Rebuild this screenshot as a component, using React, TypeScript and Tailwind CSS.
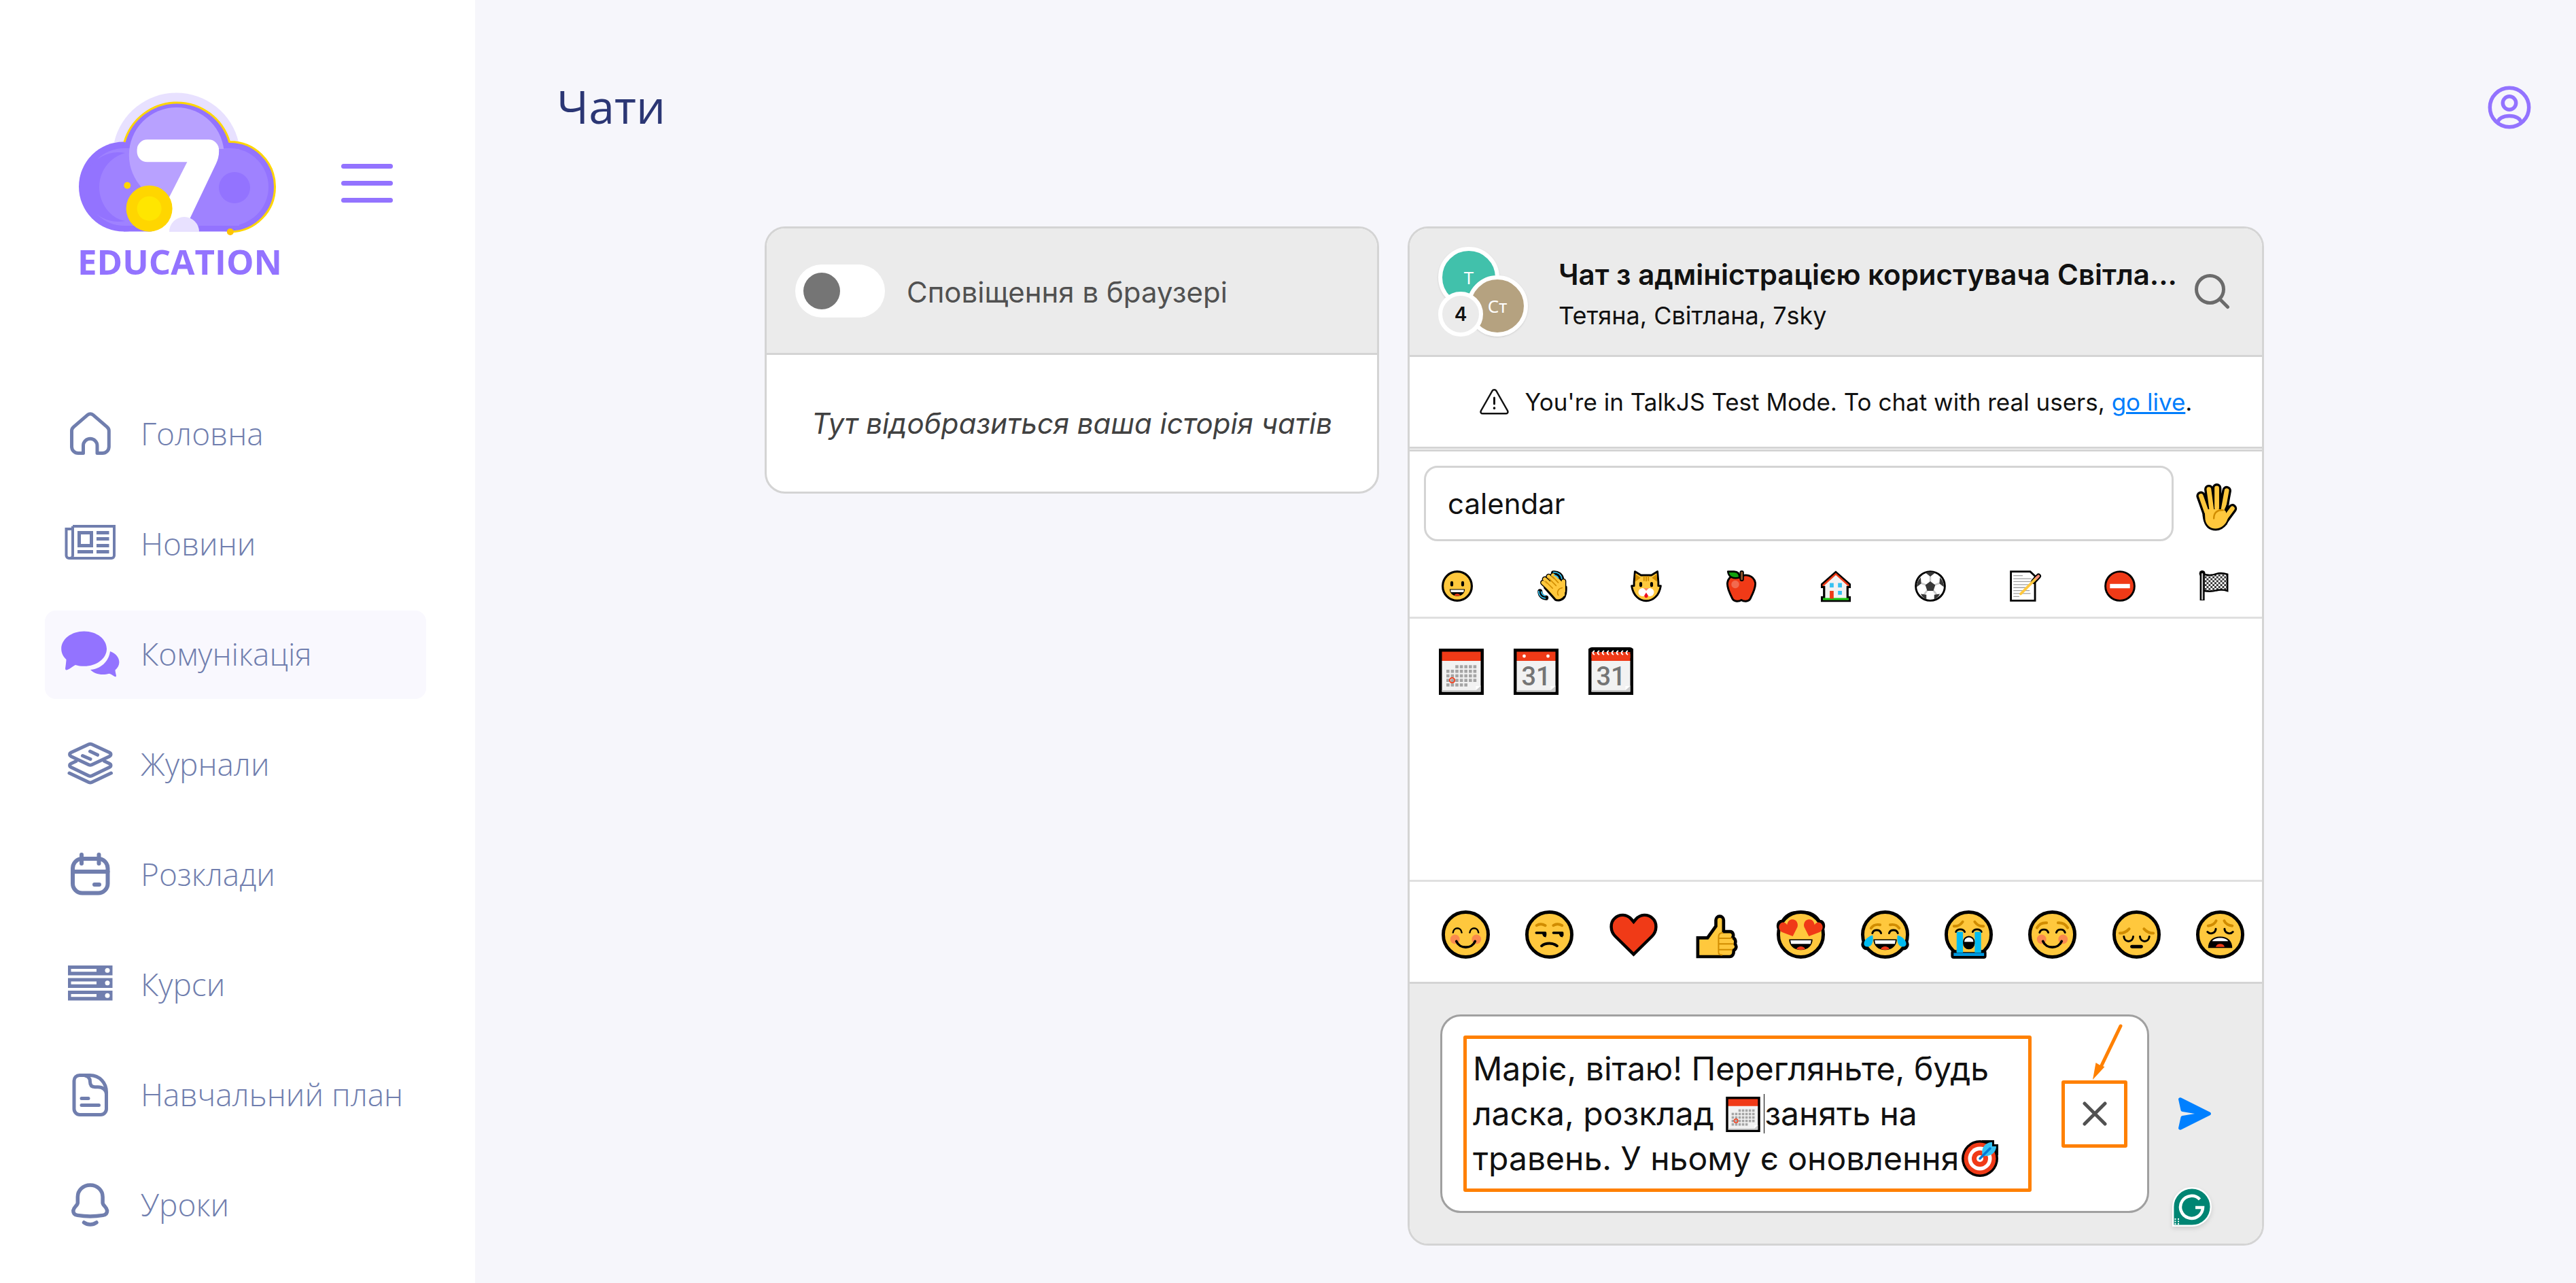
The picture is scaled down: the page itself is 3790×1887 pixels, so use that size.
import React from "react";

type IconProps = { className?: string };

/* ---------- Sidebar icons ---------- */

const NavSvg: React.FC<{ children: React.ReactNode }> = ({ children }) => (
	<svg viewBox="0 0 88 88" className="size-[88px] shrink-0" fill="none" stroke="currentColor" strokeWidth="5" strokeLinecap="round" strokeLinejoin="round" aria-hidden="true">
		{children}
	</svg>
);

const HomeIcon = () => (
	<NavSvg>
		<path d="M33.5 71.5H26a9.5 9.5 0 0 1-9.5-9.5V38.500a7 7 0 0 1 2.600-5.300L40 15.200a6 6 0 0 1 7.800 0L68.700 33.200a7 7 0 0 1 2.600 5.300V62a9.500 9.500 0 0 1-9.500 9.500H54V60.500a10.200 10.200 0 0 0-20.500 0z" />
	</NavSvg>
);

const NewsIcon = () => (
	<NavSvg>
		<g strokeWidth="4" strokeLinecap="butt" strokeLinejoin="miter">
			<path d="M18 17h61v43a4 4 0 0 1-4 4H12.500a4 4 0 0 1-4-4V21H18" />
			<path d="M18 17v43a4 4 0 0 1-4 4" />
			<path strokeWidth="5" d="M27.500 26.500h18v19h-18zM53 26.500h18.500M53 35.500h18.500M53 45.500h18.500M53 54.500h18.500M25 54.500h23" />
		</g>
	</NavSvg>
);

const ChatIcon = () => (
	<NavSvg>
		<g fill="currentColor" stroke="none">
			<path d="M34.700 9.600c18.600 0 33.300 11.500 33.300 25.600S53.300 60.800 34.700 60.800c-4.600 0-8.900-.6-12.800-1.900-3.300 2-6.800 4.600-10.900 6.900-2.500 1.200-4.300.7-3.900-2.200.7-4.400 1.200-8.800 1.400-12.600C3.900 46.700 1.200 41 1.200 35.200 1.200 21.100 16.100 9.600 34.700 9.600z" />
			<path d="M73 39c8.400 3 13.400 9.200 13.400 16 0 4.500-2.300 8.500-5.900 11.500.1 2.600.8 5 1.400 7.700.4 2-.8 2.600-2.300 1.700-2.700-1.500-5-3.300-7.900-4.200-3 .9-6.100 1.300-9.500 1.300-7.500 0-14-2.500-18.200-7C58.700 65 71 54.500 73 39z" />
		</g>
	</NavSvg>
);

const JournalIcon = () => (
	<NavSvg>
		<path d="M41.500 13.700a5.500 5.500 0 0 1 4.600 0L72 25.800c2.700 1.300 2.700 4.300 0 5.600L46.100 43.700a5.500 5.500 0 0 1-4.600 0L15.600 31.400c-2.700-1.300-2.700-4.300 0-5.600z" />
		<path d="M23 38.500l-7.400 3.400c-2.700 1.300-2.700 4.300 0 5.600l25.900 12.500a5.500 5.500 0 0 0 4.600 0L72 47.500c2.700-1.300 2.700-4.300 0-5.600l-7.400-3.400" />
		<path d="M13 56l28.500 13.400a5.500 5.500 0 0 0 4.600 0L74.500 56M32.500 30.500l11.500 5M43.500 24l11 5.300" />
	</NavSvg>
);

const ScheduleIcon = () => (
	<NavSvg>
		<rect x="18" y="20" width="51.500" height="50.500" rx="14" strokeWidth="6" />
		<path strokeWidth="6" d="M18 39h51.500M31 14v13M56.500 14v13M50 58h7" />
	</NavSvg>
);

const CoursesIcon = () => (
	<NavSvg>
		{[15, 33.5, 52].map((y) => (
			<g key={y} stroke="none">
				<rect x="11" y={y} width="65.500" height="14.500" fill="currentColor" />
				<rect x="15.500" y={y + 5} width="37.500" height="4.200" fill="#fff" />
				<circle cx="69" cy={y + 7.2} r="3.500" fill="#fff" />
			</g>
		))}
	</NavSvg>
);

const PlanIcon = () => (
	<NavSvg>
		<path d="M43.500 14.500H28a8 8 0 0 0-8 8V64a8.500 8.500 0 0 0 8.500 8.500h30.500a8.500 8.500 0 0 0 8.500-8.500V39.500C67.500 25.700 57.300 14.500 43.500 14.500z" />
		<path d="M36.500 15c4.500 1 7 4.500 7 9 0 5 2.500 7.700 7 7.700h4.500c7 0 12 4 12.500 10M31 48.500h10M31 58.500h25.500" />
	</NavSvg>
);

const BellIcon = () => (
	<NavSvg>
		<path strokeWidth="5.500" d="M43.700 14C33.300 14 25.300 21.500 25.300 31.500V40c0 4-6.500 6.500-6.500 12 0 3.500 2.500 5.800 6 6.400 12.500 2 25.300 2 37.800 0 3.500-.6 6-2.900 6-6.400 0-5.500-6.500-8-6.500-12v-8.500C62.100 21.500 54.100 14 43.700 14zM34.500 69c5.500 4 13 4 18.500 0" />
	</NavSvg>
);

const navItems = [
	{ label: "Головна", icon: HomeIcon },
	{ label: "Новини", icon: NewsIcon },
	{ label: "Комунікація", icon: ChatIcon, active: true },
	{ label: "Журнали", icon: JournalIcon },
	{ label: "Розклади", icon: ScheduleIcon },
	{ label: "Курси", icon: CoursesIcon },
	{ label: "Навчальний план", icon: PlanIcon },
	{ label: "Уроки", icon: BellIcon },
];

const Logo = () => (
	<svg viewBox="114 134 294 214" className="h-[214px] w-[294px]" aria-hidden="true">
		<path d="M168 209a94 94 0 0 1 183 0z" fill="#e8e1ff" />
		<circle cx="182" cy="274.500" r="66" fill="#9373ff" />
		<circle cx="339" cy="274.500" r="66" fill="#9373ff" />
		<circle cx="260" cy="231" r="81" fill="#9373ff" />
		<rect x="182" y="250" width="157" height="90.500" fill="#9373ff" />
		<path d="M183 209a80.500 80.500 0 0 1 154.500-.5A66 66 0 0 1 339 341" fill="none" stroke="#ffd600" strokeWidth="3" />
		<rect x="126" y="218" width="269" height="114" rx="57" fill="#9f82ff" />
		<path d="M184 225a51 51 0 1 0 0 100c-22-4-38-26-38-50s16-44 38-50z" fill="#9373ff" />
		<circle cx="259.800" cy="228" r="70" fill="#b8a1ff" />
		<path d="M258 332l64-113h30v113z" fill="#9f82ff" />
		<circle cx="345" cy="276" r="23" fill="#9373ff" />
		<rect x="201.600" y="205.300" width="120.400" height="33" rx="15" fill="#fff" />
		<path d="M275.500 238l14-20H322q1 12-4 22.500L270 341h-47z" fill="#fff" />
		<path d="M249 341a22 22 0 0 1 44 0z" fill="#e8e1ff" />
		<circle cx="219.600" cy="306.700" r="34" fill="#ffd600" />
		<circle cx="219.600" cy="306.700" r="18" fill="#ffe600" />
		<circle cx="187.300" cy="272.700" r="5" fill="#ffd600" />
		<circle cx="338.800" cy="341" r="5" fill="#ffc400" />
	</svg>
);

/* ---------- Emoji ---------- */

const Emoji: React.FC<{ className?: string; children: React.ReactNode }> = ({ className = "size-[71px]", children }) => (
	<svg viewBox="0 0 72 72" className={`${className} overflow-visible`} fill="none" strokeLinecap="round" strokeLinejoin="round" aria-hidden="true">
		{children}
	</svg>
);

const Head = () => <circle cx="36" cy="36" r="33.500" fill="#ffc83d" stroke="#000" strokeWidth="5" />;

const OpenMouth = () => (
	<>
		<path d="M18.500 43h35c0 9-7 16-17.500 16s-17.500-7-17.500-16z" fill="#000" />
		<path d="M20.500 44.500h31l-1 5.500h-29z" fill="#fff" />
		<path d="M29.500 57.500c2-5 11-5 13 0-4 1.600-9 1.600-13 0z" fill="#f03a17" />
	</>
);

const Brows: React.FC<{ d: string }> = ({ d }) => <path d={d} stroke="#d08c00" strokeWidth="4" />;

const Grin = ({ className }: IconProps) => (
	<Emoji className={className}>
		<Head />
		<path d="M23.500 28v5.500M48.500 28v5.500" stroke="#000" strokeWidth="6.500" />
		<OpenMouth />
	</Emoji>
);

const Blush = () => (
	<Emoji>
		<Head />
		<circle cx="20" cy="43" r="7" fill="#fa8a4e" />
		<circle cx="52" cy="43" r="7" fill="#fa8a4e" />
		<path d="M17 33c1-8.500 12-8.500 13 0M42 33c1-8.500 12-8.500 13 0" stroke="#000" strokeWidth="2.500" />
		<path d="M22 46c5 12 23 12 28 0" stroke="#000" strokeWidth="3.800" />
	</Emoji>
);

const Unamused = () => (
	<Emoji>
		<Head />
		<Brows d="M17 22.500q6-4 13 0M42 22.500q6-4 13 0" />
		<path d="M16.500 33.500H30v3.500M42 33.500h13.500v3.500" stroke="#000" strokeWidth="3.500" />
		<path d="M25 33h6v7c-4 0-5-2-6-7zM50 33h6v7c-4 0-5-2-6-7z" fill="#000" />
		<path d="M24.500 53c6-5 17-5 23 0" stroke="#000" strokeWidth="4" />
	</Emoji>
);

const Heart = () => (
	<Emoji>
		<path d="M36 65.500L8.500 38.500C1 31 .5 18 8 11.500c7-6.500 18-6 24.500 1.500l3.500 4 3.500-4C46 5.500 57 5 64 11.500c7.500 6.500 7 19.500-.5 27z" fill="#f03a17" stroke="#000" strokeWidth="4.500" strokeLinejoin="miter" />
	</Emoji>
);

const ThumbUp = () => (
	<Emoji>
		<path d="M7 69V41h14.500L34 23.500V14.500a5.700 5.700 0 0 1 11.500 0V31.500h9.500c5 0 6 6 4 9 4.500 2 5 6 3.500 9.500 3 3 2 8-2 9.500.5 6-2 9.500-6 9.500z" fill="#ffc83d" stroke="#000" strokeWidth="4.700" strokeLinejoin="miter" />
		<path d="M44 33.500c-4 0-6 2-6 6V62c0 3 2 4.500 5 4.500M38.500 41.500H58M38.500 50H60M38.500 58.500H58" stroke="#d08c00" strokeWidth="2" />
	</Emoji>
);

const HeartEyes = () => (
	<Emoji>
		<path d="M3 28c-3-7 0-12 5-12C17 2 28 2.500 36 2.500S55 2 64 16c5 0 8 5 5 12" stroke="#000" strokeWidth="4" />
		<Head />
		<path d="M24 38.500L8 32.500c-5-3-5.500-8-3.500-11.500 3-4.500 8-4 11 .5 1-6 4.500-8.500 9-8 5 .5 8 6 6.500 11zM48 38.500l16-6c5-3 5.500-8 3.500-11.500-3-4.500-8-4-11 .5-1-6-4.500-8.500-9-8-5 .5-8 6-6.500 11z" fill="#f03a17" />
		<OpenMouth />
	</Emoji>
);

const Joy = () => (
	<Emoji>
		<path d="M15 38C3 43-1 51 4 56c3 3 8 2 10 0M57 38c12 5 16 13 11 18-3 3-8 2-10 0" fill="#000" stroke="#000" strokeWidth="3" />
		<Head />
		<Brows d="M15 26.500c3-4.500 8-6 13.500-5M57 26.500c-3-4.500-8-6-13.500-5" />
		<path d="M17 34c2-6 11-6 13 0M42 34c2-6 11-6 13 0" stroke="#000" strokeWidth="3" />
		<OpenMouth />
		<path d="M17.500 37c1 7 0 12-2.500 15-3 3-8 3-10 0C2.500 47 9 39 17.500 37zM54.500 37c-1 7 0 12 2.500 15 3 3 8 3 10 0 2.500-5-4-13-12.500-15z" fill="#00bcf2" />
	</Emoji>
);

const Sob = () => (
	<Emoji>
		<Head />
		<rect x="9.500" y="59" width="53" height="13" rx="4" fill="#000" />
		<path d="M18 56h36v6H18z" fill="#ffc83d" />
		<Brows d="M14 23.500c6 .5 10-2 13-6.500M58 23.500c-6 .5-10-2-13-6.500" />
		<path d="M17 32c2-5 11-5 13 0M42 32c2-5 11-5 13 0" stroke="#000" strokeWidth="3" />
		<path d="M18 32h9.500v31H18zM45 32h9.500v31H45z" fill="#00bcf2" />
		<path d="M13.500 63.500h45.500v4.500H13.500z" fill="#0098e0" />
		<rect x="27.500" y="38" width="17.500" height="20" rx="8.700" fill="#000" />
		<path d="M29.500 47c0-9 13.500-9 13.500 0z" fill="#fff" />
	</Emoji>
);

const Relaxed = () => (
	<Emoji>
		<Head />
		<Brows d="M13 26c3-5 8-8 14.500-7.500M59 26c-3-5-8-8-14.500-7.500" />
		<circle cx="20" cy="43" r="7" fill="#fa8a4e" />
		<circle cx="52" cy="43" r="7" fill="#fa8a4e" />
		<path d="M17 33c2-6 11-6 13 0M42 33c2-6 11-6 13 0" stroke="#000" strokeWidth="3" />
		<path d="M22 46c5 12 23 12 28 0" stroke="#000" strokeWidth="3.800" />
	</Emoji>
);

const Pensive = () => (
	<Emoji>
		<Head />
		<Brows d="M11 34c6 0 10-2 14-6.500M61 34c-6 0-10-2-14-6.500" />
		<path d="M17 39c1 9.500 13 9.500 14 0M41 39c1 9.500 13 9.500 14 0" stroke="#000" strokeWidth="3" />
		<path d="M29 54h14" stroke="#000" strokeWidth="5" />
	</Emoji>
);

const Weary = () => (
	<Emoji>
		<Head />
		<Brows d="M18 23c6-.5 10-3 12-7.500M54 23c-6-.5-10-3-12-7.500" />
		<path d="M17 32c4 4.500 12 2 12.500-4.500M55 32c-4 4.500-12 2-12.500-4.500" stroke="#000" strokeWidth="3" />
		<path d="M18 56c0-10 6-17 18-17s18 7 18 17z" fill="#000" />
		<path d="M24 46c3-6.500 21-6.500 24 0z" fill="#fff" />
		<path d="M29.500 54.500c1-6 12-6 13 0z" fill="#f03a17" />
	</Emoji>
);

const RaisedHand = () => {
	const fingers = "M10.500 20L19 44M22.500 10l4 30M34.500 8v30M49.500 12L44 42M58 39L44 58";
	return (
		<Emoji className="size-[70px]">
			<path d={fingers} stroke="#000" strokeWidth="14" />
			<path d="M16 42c0 18 6 27 17 27 6 0 10-3 14-8l6-14-8-6-24-2z" fill="#ffc83d" stroke="#000" strokeWidth="7" />
			<path d={fingers} stroke="#ffc83d" strokeWidth="7" />
			<path d="M16 40h31l4 14c-4 18-30 22-34 2z" fill="#ffc83d" />
			<path d="M30 54c0-9 5-13 14-12.500" stroke="#d08c00" strokeWidth="2.500" />
			<path d="M47.500 41l4-9" stroke="#000" strokeWidth="3" />
		</Emoji>
	);
};

const Wave = () => {
	const fingers = "M16 28l24 22M20 20l24 22M29 14l22 22M39 11l16 17M63 25v22";
	return (
		<Emoji className="size-[46px]">
			<path d="M40 6c10-1 18 5 19 14M9 48c0 8 5 14 14 15" stroke="#000" strokeWidth="11" />
			<path d={fingers} stroke="#000" strokeWidth="13" />
			<path d="M20 40l24 27c6 4 18 1 22-7 4-8 3-14 3-22l-18-12z" fill="#ffc83d" stroke="#000" strokeWidth="5" />
			<path d={fingers} stroke="#ffc83d" strokeWidth="8.500" />
			<path d="M20 34l26-18 20 18v24L48 66z" fill="#ffc83d" />
			<path d="M22 25l16 16M29 18l17 17M38 14l13 14M60 40c-9 2-13 9-9 17" stroke="#d08c00" strokeWidth="2.500" />
			<path d="M40 4c11 0 18 6 19 15M42 11c5 1 8 3 9 7M6 48c0 9 6 15 15 16M12 49c1 5 4 8 9 9" stroke="#35c1f1" strokeWidth="2.800" />
		</Emoji>
	);
};

const Cat = () => (
	<Emoji className="size-[46px]">
		<path d="M10 2.500L24 11h24L62 2.500l2 24v9h5.500C66 58 52 70 36 70S6 58 2.500 35.500H8v-9z" fill="#ffc83d" stroke="#000" strokeWidth="4.500" />
		<path d="M11 8l12 9-12 9zM61 8l-12 9 12 9z" fill="#d08c00" />
		<path d="M31 14v9M36 14v10M41 14v9" stroke="#d08c00" strokeWidth="3" />
		<path d="M23.500 30v5M48.500 30v5" stroke="#000" strokeWidth="6.500" />
		<circle cx="27.500" cy="50" r="9.500" fill="#fff" />
		<circle cx="44.500" cy="50" r="9.500" fill="#fff" />
		<path d="M30 40.500h12L36 47z" fill="#ff8a65" />
		<path d="M36 51l4 6c1 8-9 8-8 0z" fill="#f00c20" />
	</Emoji>
);

const Apple = () => (
	<Emoji className="size-[46px]">
		<path d="M36 14c8-6 28-4 32 14 2 12-7 28-12 38-4 6-14 6-20 2-6 4-16 4-20-2C11 56 2 40 4 28 7 10 26 8 36 14z" fill="#f03a17" stroke="#000" strokeWidth="4.500" />
		<path d="M5 2.500h14c10 0 13 7 13 14-14 3-25 0-27-14z" fill="#13a10e" stroke="#000" strokeWidth="4" />
		<path d="M37 5v15" stroke="#000" strokeWidth="10" />
		<path d="M37 5v15" stroke="#8e562e" strokeWidth="4.500" />
		<circle cx="22" cy="32" r="9" fill="#f26a4f" />
	</Emoji>
);

const House = () => (
	<Emoji className="size-[46px]">
		<path d="M36 4L4 32v6h5v24H4v8h64v-8h-5V38h5v-6z" fill="#f2f2f2" stroke="#000" strokeWidth="5" strokeLinejoin="miter" />
		<path d="M7 34L36 8l29 26" stroke="#f03a17" strokeWidth="4" />
		<path d="M6.500 63.500h59V68h-59z" fill="#16c60c" />
		<path d="M22 29h9v10h-9zM41 29h9v10h-9zM41 47h9v9h-9z" fill="#35c1f1" />
		<path d="M22 47h9v18h-9z" fill="#f03a17" />
	</Emoji>
);

const Ball = () => (
	<Emoji className="size-[46px]">
		<circle cx="36" cy="36" r="33.500" fill="#fff" stroke="#000" strokeWidth="4.500" />
		<path d="M36 25v-11M47 33l11-4M43 46l7 9M29 46l-7 9M25 33l-11-4" stroke="#ccc" strokeWidth="4" />
		<path d="M36 25l11.500 8.500L43 47H29l-4.500-13.500zM25 5.500L36 14l11-8.500Q36 1 25 5.500zM5 38l10-8-1-14Q4 26 5 38zM67 38l-10-8 1-14Q68 26 67 38zM14 54l13 2v11Q18 63 14 54zM58 54l-13 2v11q9-4 13-13z" fill="#383838" />
	</Emoji>
);

const Memo = () => (
	<Emoji className="size-[46px]">
		<path d="M2.500 2.500H47L58 13v56.500H2.500z" fill="#fff" stroke="#000" strokeWidth="4.500" strokeLinejoin="miter" />
		<path d="M9 12h20M9 19h40M9 25.500h40M9 32.500h40M9 39.500h32M9 46.500h36M9 53h38M9 60h12" stroke="#a0a0a0" strokeWidth="2" />
		<path d="M55 25L66 13" stroke="#000" strokeWidth="12" />
		<path d="M25 54L63 16" stroke="#ffc83d" strokeWidth="6" />
		<path d="M61 18l5-5" stroke="#f78f7c" strokeWidth="6" />
	</Emoji>
);

const NoEntry = () => (
	<Emoji className="size-[46px]">
		<circle cx="36" cy="36" r="33.500" fill="#f03a17" stroke="#000" strokeWidth="4.500" />
		<rect x="13" y="31" width="46" height="10" fill="#fff" />
	</Emoji>
);

const Flag = () => (
	<Emoji className="size-[46px]">
		<defs>
			<pattern id="checks" width="9" height="9" patternUnits="userSpaceOnUse">
				<path d="M0 0h9v9H0z" fill="#fff" />
				<path d="M0 0h4.500v4.500H0zM4.500 4.500H9V9H4.500z" fill="#333" />
			</pattern>
		</defs>
		<path d="M11 9c14 3 20 2 29-1 9-3 17-2 26 1v38c-9-3-17-3-26-1-9 3-15 3-29 1z" fill="url(#checks)" stroke="#000" strokeWidth="4" strokeLinejoin="miter" />
		<path d="M8 7v62" stroke="#000" strokeWidth="11" strokeLinecap="butt" />
		<circle cx="8" cy="7" r="7" fill="#000" />
		<path d="M8 8v58" stroke="#ccc" strokeWidth="3.500" />
	</Emoji>
);

const calendarDots = [
	[2, 3, 4, 5, 6],
	[0, 1, 2, 3, 4, 5, 6],
	[0, 1, 2, 3, 4, 5, 6],
	[0, 1, 2, 3, 4, 5, 6],
	[0, 1, 2, 3, 4],
];

const CalendarFrame: React.FC<{ className?: string; label: string; children: React.ReactNode }> = ({ className = "h-[68px] w-[66px]", label, children }) => (
	<svg viewBox="0 0 66 68" className={`${className} overflow-visible`} role="img" aria-label={label}>
		<rect width="66" height="68" fill="#000" />
		<rect x="4.500" y="4.500" width="57" height="14" fill="#f03a17" />
		<rect x="4.500" y="18" width="57" height="45.500" fill="#f2f2f2" />
		<path d="M4.500 61h50l7-7v9.500h-57z" fill="#ccc" />
		<path d="M54.500 61v-6h7z" fill="#fff" />
		{children}
	</svg>
);

const CalendarDotted = ({ className }: IconProps) => (
	<CalendarFrame className={className} label="calendar">
		{calendarDots.map((row, y) => row.map((x) => <rect key={`${x}-${y}`} x={11 + x * 6.6} y={24.3 + y * 6.7} width="4.600" height="4.600" fill="#a5a5a5" />))}
		<circle cx="19.500" cy="46.500" r="3.700" fill="none" stroke="#f03a17" strokeWidth="1.800" />
	</CalendarFrame>
);

const CalendarDay = () => (
	<CalendarFrame label="date">
		<circle cx="15.500" cy="11" r="2.400" fill="#fff" />
		<circle cx="50.500" cy="11" r="2.400" fill="#fff" />
		<text x="33" y="54" textAnchor="middle" fill="#757575" className="font-['Roboto',sans-serif] text-[38px] font-medium">31</text>
	</CalendarFrame>
);

const CalendarSpiral = () => (
	<CalendarFrame label="spiral calendar">
		<path d="M0 4q0-6 5-6h56q5 0 5 6v4H0z" fill="#000" />
		<path d="M4.500 5h57v9h-57z" fill="#f03a17" />
		<path d="M9 3q-5 3 0 6M16 3q-5 3 0 6M23 3q-5 3 0 6M30 3q-5 3 0 6M37 3q-5 3 0 6M44 3q-5 3 0 6M51 3q-5 3 0 6M58 3q-5 3 0 6" fill="none" stroke="#fff" strokeWidth="2" />
		<text x="33" y="54" textAnchor="middle" fill="#757575" className="font-['Roboto',sans-serif] text-[38px] font-medium">31</text>
	</CalendarFrame>
);

const Target = () => (
	<svg viewBox="0 0 54 54" className="ml-1 inline-block size-[54px] align-[-10px]" role="img" aria-label="bullseye">
		<circle cx="27" cy="27" r="27" fill="#000" />
		<path d="M30 0h18v6h6v16H30z" fill="#000" />
		<circle cx="27" cy="27" r="23.500" fill="#f03a17" />
		<circle cx="27" cy="27" r="17.500" fill="#fff" />
		<circle cx="27" cy="27" r="12" fill="#f03a17" />
		<circle cx="27" cy="27" r="5" fill="#fff" />
		<path d="M31 23c-3-12 4-20 14-20v6h6c0 8-7 16-20 14z" fill="#35c1f1" />
		<path d="M27 27l15-15" stroke="#0078d7" strokeWidth="3.500" strokeLinecap="round" />
	</svg>
);

const categories = [
	{ name: "Smileys", icon: <Grin className="size-[46px]" /> },
	{ name: "People", icon: <Wave /> },
	{ name: "Animals", icon: <Cat /> },
	{ name: "Food", icon: <Apple /> },
	{ name: "Places", icon: <House /> },
	{ name: "Activities", icon: <Ball /> },
	{ name: "Objects", icon: <Memo /> },
	{ name: "Symbols", icon: <NoEntry /> },
	{ name: "Flags", icon: <Flag /> },
];

const frequent = [
	{ name: "smile", icon: <Blush /> },
	{ name: "unamused", icon: <Unamused /> },
	{ name: "heart", icon: <Heart /> },
	{ name: "thumbs up", icon: <ThumbUp /> },
	{ name: "heart eyes", icon: <HeartEyes /> },
	{ name: "joy", icon: <Joy /> },
	{ name: "sob", icon: <Sob /> },
	{ name: "relaxed", icon: <Relaxed /> },
	{ name: "pensive", icon: <Pensive /> },
	{ name: "weary", icon: <Weary /> },
];

/* ---------- Page parts ---------- */

const Sidebar: React.FC = () => (
	<aside className="w-[699px] shrink-0 bg-white pt-[134px] font-['Open_Sans',sans-serif]">
		<div className="flex items-start pl-[114px]">
			<a href="/" className="flex w-[294px] flex-col">
				<Logo />
				<span className="mt-2 text-[51px] leading-[56px] font-bold text-[#9373ff]">EDUCATION</span>
			</a>
			<button type="button" aria-label="Меню" className="mt-[107px] ml-[94px] flex flex-col gap-[18px]">
				<span className="h-[7px] w-[76px] rounded-full bg-[#9373ff]" />
				<span className="h-[7px] w-[76px] rounded-full bg-[#9373ff]" />
				<span className="h-[7px] w-[76px] rounded-full bg-[#9373ff]" />
			</button>
		</div>
		<nav className="mt-[162px] flex flex-col gap-8 pr-[72px] pl-[66px]">
			{navItems.map(({ label, icon: Icon, active }) => (
				<a
					key={label}
					href="#"
					className={`flex h-[130px] items-center gap-[30px] rounded-2xl pl-[23px] text-[46px] font-light text-[#707eae] ${active ? "bg-[#f9f8fe]" : ""}`}
				>
					<span className={active ? "text-[#9373ff]" : ""}>
						<Icon />
					</span>
					<span className="pb-1">{label}</span>
				</a>
			))}
		</nav>
	</aside>
);

const HistoryCard: React.FC = () => (
	<section className="self-start overflow-hidden rounded-[30px] border-[3px] border-[#d4d4d4] bg-white">
		<label className="flex h-[186px] items-center gap-8 border-b-[3px] border-[#d4d4d4] bg-[#ebebeb] pl-[42px] text-[42px] text-[#515151]">
			<input
				type="checkbox"
				role="switch"
				className="h-[78px] w-[132px] shrink-0 appearance-none rounded-full bg-white p-3 before:block before:size-[54px] before:rounded-full before:bg-[#757575] checked:before:ml-auto"
			/>
			<span className="pt-1">Сповіщення в браузері</span>
		</label>
		<p className="flex h-[201px] items-center justify-center text-[42px] text-[#414141] italic">Тут відобразиться ваша історія чатів</p>
	</section>
);

const ChatHeader: React.FC = () => (
	<header className="flex h-[189px] items-center border-b-[3px] border-[#d4d4d4] bg-[#ebebeb] pr-[47px] pl-[42px] text-[#111]">
		<div className="relative h-[132px] w-[132px] shrink-0 font-['Noto_Sans',sans-serif] text-[26px] text-white">
			<span className="absolute top-0 left-0 flex size-[90px] items-center justify-center rounded-full border-[6px] border-white bg-[#41c1ab] shadow-sm">Т</span>
			<span className="absolute right-0 bottom-0 flex size-[90px] items-center justify-center rounded-full border-[6px] border-white bg-[#b5a280] shadow-sm">Ст</span>
			<span className="absolute bottom-0 left-0 flex size-[66px] items-center justify-center rounded-full border-[6px] border-white bg-[#ebebeb] font-['Inter',sans-serif] text-[28px] font-semibold text-[#111]">4</span>
		</div>
		<div className="ml-[45px] min-w-0 flex-1 pt-[10px]">
			<h2 className="truncate text-[42px] leading-[60px] font-semibold">Чат з адміністрацією користувача Світла...</h2>
			<p className="truncate text-[36px] leading-[60px]">Тетяна, Світлана, 7sky</p>
		</div>
		<button type="button" aria-label="Search" className="ml-4 text-[#6b6b6b]">
			<svg viewBox="0 0 52 52" className="size-[52px]" fill="none" stroke="currentColor" strokeWidth="5" strokeLinecap="round" aria-hidden="true">
				<circle cx="22.500" cy="22.500" r="20" />
				<path d="M37.500 37.500l11 11" />
			</svg>
		</button>
	</header>
);

const TestModeNotice: React.FC = () => (
	<div className="flex h-[135px] items-center justify-center gap-6 border-b-[3px] border-[#d4d4d4] text-[35px] text-[#111]">
		<svg viewBox="0 0 43 38" className="h-[38px] w-[43px] shrink-0" fill="none" stroke="currentColor" strokeWidth="2.500" strokeLinecap="round" strokeLinejoin="round" aria-hidden="true">
			<path d="M18.500 3L2 32c-1.200 2.400 0 4.300 2.500 4.300h34c2.500 0 3.700-1.900 2.500-4.300L24.500 3c-1.400-2.300-4.600-2.300-6 0z" />
			<path d="M21.500 13v9" strokeWidth="3" />
			<path d="M21.500 28v.5" strokeWidth="3.500" />
		</svg>
		<p>
			You're in TalkJS Test Mode. To chat with real users,{" "}
			<a href="#" className="text-[#007dfc] underline decoration-3">go live</a>.
		</p>
	</div>
);

const EmojiPicker: React.FC = () => (
	<div className="mt-px border-t-[3px] border-[#d4d4d4]">
		<div className="flex items-center gap-[30px] pt-[21px] pr-[30px] pl-[21px]">
			<input
				type="text"
				aria-label="Search emoji"
				defaultValue="calendar"
				className="h-[111px] min-w-0 flex-1 rounded-[20px] border-[3px] border-[#d4d4d4] px-8 text-[42px] text-[#111]"
			/>
			<button type="button" aria-label="Skin tone" className="pt-2">
				<RaisedHand />
			</button>
		</div>
		<div className="grid h-[114px] grid-cols-9 border-b-[3px] border-[#e0e0e0] pt-5">
			{categories.map(({ name, icon }) => (
				<button key={name} type="button" aria-label={name} className="flex items-center justify-center">
					{icon}
				</button>
			))}
		</div>
		<div className="flex h-[387px] items-start gap-11 border-b-[3px] border-[#e0e0e0] px-[43px] pt-11">
			<button type="button"><CalendarDotted /></button>
			<button type="button"><CalendarDay /></button>
			<button type="button"><CalendarSpiral /></button>
		</div>
		<div className="flex h-[150px] items-center justify-between border-b-[3px] border-[#d4d4d4] pt-2 pr-[26px] pl-[47px]">
			{frequent.map(({ name, icon }) => (
				<button key={name} type="button" aria-label={name}>
					{icon}
				</button>
			))}
		</div>
	</div>
);

const Composer: React.FC = () => (
	<div className="relative flex items-center gap-[43px] bg-[#ebebeb] py-[45px] pr-[75px] pl-[45px]">
		<div className="relative flex min-w-0 flex-1 items-center gap-11 rounded-[30px] border-[3px] border-[#a0a0a0] bg-white py-[28px] pr-[29px] pl-[31px]">
			<div
				role="textbox"
				aria-label="Message"
				contentEditable
				suppressContentEditableWarning
				className="min-w-0 flex-1 rounded-[3px] border-[5px] border-[#ff8000] py-[11px] pl-[9px] text-[48px] leading-[66px] text-[#111] outline-none"
			>
				Маріє, вітаю! Перегляньте, будь ласка, розклад{" "}
				<CalendarDotted className="ml-1 inline-block h-[52px] w-[51px] align-[-10px]" />
				<span className="ml-[5px] inline-block h-[58px] w-px bg-black align-[-12px]" />
				занять на травень. У ньому є оновлення
				<Target />
			</div>
			<button type="button" aria-label="Close emoji picker" className="flex h-[99px] w-[97px] shrink-0 items-center justify-center rounded-[3px] border-[5px] border-[#ff8000] text-[#515151]">
				<svg viewBox="0 0 36 36" className="size-9" fill="none" stroke="currentColor" strokeWidth="5" strokeLinecap="round" aria-hidden="true">
					<path d="M3 3l30 30M33 3L3 33" />
				</svg>
			</button>
			{/* Pointer to the close button */}
			<svg viewBox="0 0 44 84" className="absolute top-[10px] right-[36px] h-[84px] w-[44px]" aria-hidden="true">
				<path d="M41 4L13 62" stroke="#ff8000" strokeWidth="5" strokeLinecap="round" />
				<path d="M0 83L4.500 58l6 3.500L17.500 64z" fill="#ff8000" />
			</svg>
		</div>
		<button type="button" aria-label="Send" className="shrink-0 text-[#0080ff]">
			<svg viewBox="0 0 48 48" className="size-12" fill="currentColor" aria-hidden="true">
				<path d="M4 .5l42.500 21.200c2 1 2 3.600 0 4.600L4 47.500c-2.200 1-4.300-.5-3.900-2.800l3.400-15.500c.3-1.300 1.200-2.100 2.500-2.300L24 24 6 21.100c-1.300-.2-2.200-1-2.500-2.300L.1 3.300C-.3 1 1.800-.5 4 .5z" />
			</svg>
		</button>
		{/* Writing assistant badge */}
		<svg viewBox="0 0 58 58" className="absolute right-[74px] bottom-[25px] size-[58px] overflow-visible drop-shadow-md" fill="none" aria-hidden="true">
			<path d="M29 1.200a27.500 27.500 0 0 1 0 55.500H1.200V29A27.700 27.700 0 0 1 29 1.200z" fill="#008573" stroke="#fff" strokeWidth="2.400" />
			<path d="M40.500 18A16.500 16.500 0 1 0 45 30H34" stroke="#fff" strokeWidth="4.500" />
			<path d="M4.500 46v9M9 46v9" stroke="#fff" strokeWidth="2" strokeDasharray="2 1.500" />
		</svg>
	</div>
);

const App: React.FC = () => {
	return (
		<div className="flex min-h-screen bg-[#f6f6fb] font-['Inter',sans-serif]">
			<Sidebar />
			<main className="min-w-0 flex-1 pb-[54px]">
				<div className="flex h-[333px] items-start justify-between pt-[106px] pr-[66px] pl-[120px]">
					<h1 className="font-['Open_Sans',sans-serif] text-[68px] leading-[100px] text-[#2b3674]">Чати</h1>
					<button type="button" aria-label="Профіль" className="mt-5 text-[#9373ff]">
						<svg viewBox="0 0 64 64" className="size-16" fill="none" stroke="currentColor" strokeWidth="5.500" aria-hidden="true">
							<circle cx="32" cy="32" r="28.700" />
							<circle cx="32" cy="25.500" r="9.700" />
							<path d="M15 55c0-14 34-14 34 0" />
						</svg>
					</button>
				</div>
				<div className="flex justify-center pr-[33px]">
					<div className="grid w-full max-w-[2206px] grid-cols-[minmax(0,904fr)_minmax(0,1260fr)] gap-[42px]">
						<HistoryCard />
						<section className="overflow-hidden rounded-[30px] border-[3px] border-[#d4d4d4] bg-white">
							<ChatHeader />
							<TestModeNotice />
							<EmojiPicker />
							<Composer />
						</section>
					</div>
				</div>
			</main>
		</div>
	);
};

export default App;
